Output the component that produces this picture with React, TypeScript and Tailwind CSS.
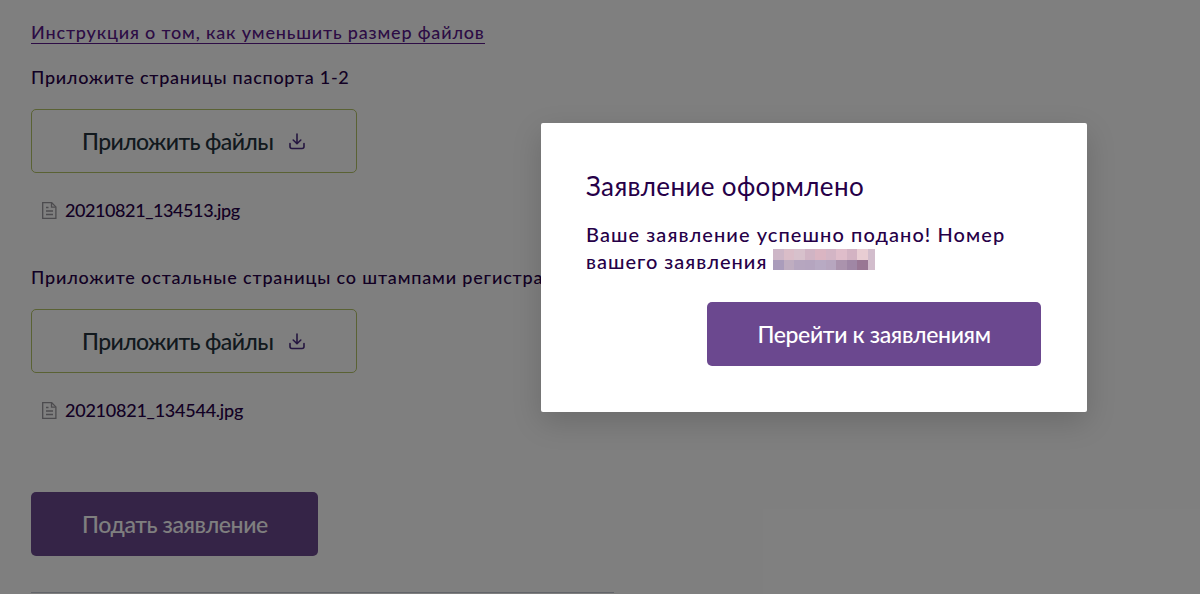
import { Fragment } from 'react';

const sections = [
  { title: 'Приложите страницы паспорта 1-2', file: '20210821_134513.jpg', titleClass: 'tracking-[0.73px]', fileClass: 'tracking-[-0.42px]' },
  { title: 'Приложите остальные страницы со штампами регистрации', file: '20210821_134544.jpg', titleClass: 'tracking-[0.84px]', fileClass: 'tracking-[-0.24px]' },
];

const mosaic = [
  ['#cdb6c7', '#dabdc8', '#d7c1cc', '#d0b4c4', '#dab5c2', '#d3b5c5', '#dfbdca', '#d3b3c3', '#e8cdd3'],
  ['#aa9cbb', '#bfadc0', '#b6a6bf', '#b5a5bf', '#b8aac3', '#b7a6bf', '#ab93ad', '#a087a5', '#997794'],
];

function DownloadIcon() {
  return (
    <svg width="16" height="17" viewBox="0 0 16 17" fill="none" stroke="#4a2c80" strokeWidth="1.6" strokeLinecap="round" strokeLinejoin="round">
      <path d="M8 1v9.5M4.2 7 8 10.7 11.8 7" />
      <path d="M1 10.5v3a2 2 0 0 0 2 2h10a2 2 0 0 0 2-2v-3" />
    </svg>
  );
}

function FileIcon() {
  return (
    <svg width="15" height="17" viewBox="0 0 15 17" fill="none" stroke="#99979c" strokeWidth="1.3">
      <path d="M.7.7h9l4.2 4.2v11.4H.7z" />
      <path d="M9.5.8v4.3h4.2M4 5.5h2.5M4 9h7M4 12.5h7" />
    </svg>
  );
}

export default function App() {
  return (
    <div className="relative h-[594px] w-[1200px] overflow-hidden bg-white font-['Lato',sans-serif] font-medium text-[#260048]">
      <main className="flex flex-col items-start whitespace-nowrap pl-[31px] pt-5">
        <a href="#" className="h-6 border-b border-[#5a188a] text-[18px] leading-6 tracking-[0.82px] text-[#5a188a]">
          Инструкция о том, как уменьшить размер файлов
        </a>
        <div className="h-[21px]" />
        {sections.map((section) => (
          <Fragment key={section.file}>
            <p className={`h-11 text-[18px] leading-6 ${section.titleClass}`}>{section.title}</p>
            <button className="flex h-16 w-[326px] items-center gap-[15px] rounded-[5px] border border-[#b4c468] pl-[50px] text-[23px] tracking-[-0.62px] text-[#24333c]">
              <span className="w-[191.5px] pt-px text-left">Приложить файлы</span>
              <DownloadIcon />
            </button>
            <div className="flex h-[92px] items-start gap-[8px] pl-[11px] pt-[29px]">
              <FileIcon />
              <span className={`-mt-1 text-[18px] leading-6 ${section.fileClass}`}>{section.file}</span>
            </div>
          </Fragment>
        ))}
        <button className="mt-[27px] h-16 w-[287px] rounded-[5px] bg-[#6b488f] pl-[51px] text-left text-[23px] tracking-[-0.4px] text-white">
          Подать заявление
        </button>
        <hr className="mt-[36px] w-[583px] border-[#c4c8d2]" />
      </main>

      <div className="absolute inset-0 bg-black/50">
        <div className="absolute left-[540.5px] top-[123px] flex h-[288.5px] w-[546.5px] flex-col rounded-[2px] bg-white pl-[45.5px] pr-[46px] pt-[46px] shadow-[0_10px_30px_rgba(0,0,0,0.16)]">
          <h2 className="whitespace-nowrap text-[26px] font-normal leading-[34px] tracking-[0.35px]">Заявление оформлено</h2>
          <p className="mt-[18px] whitespace-nowrap text-[20px] leading-[27px] tracking-[1.07px]">Ваше заявление успешно подано! Номер</p>
          <div className="flex h-[27px] items-start gap-[6px]">
            <span className="text-[20px] leading-[27px] tracking-[1px]">вашего заявления</span>
            <div className="flex flex-col pt-px">
              {mosaic.map((row, i) => (
                <div key={i} className="flex">
                  {row.map((color, j) => (
                    <span key={j} className="h-[10.5px] w-[10.5px]" style={{ backgroundColor: color }} />
                  ))}
                  <span className="h-[10.5px] w-[7px] bg-[#d2bdcc]" />
                </div>
              ))}
            </div>
          </div>
          <button className="mt-[27px] h-16 w-[334px] shrink-0 self-end rounded-[5px] bg-[#6b488f] text-[23px] tracking-[-0.35px] text-white">
            Перейти к заявлениям
          </button>
        </div>
      </div>
    </div>
  );
}
